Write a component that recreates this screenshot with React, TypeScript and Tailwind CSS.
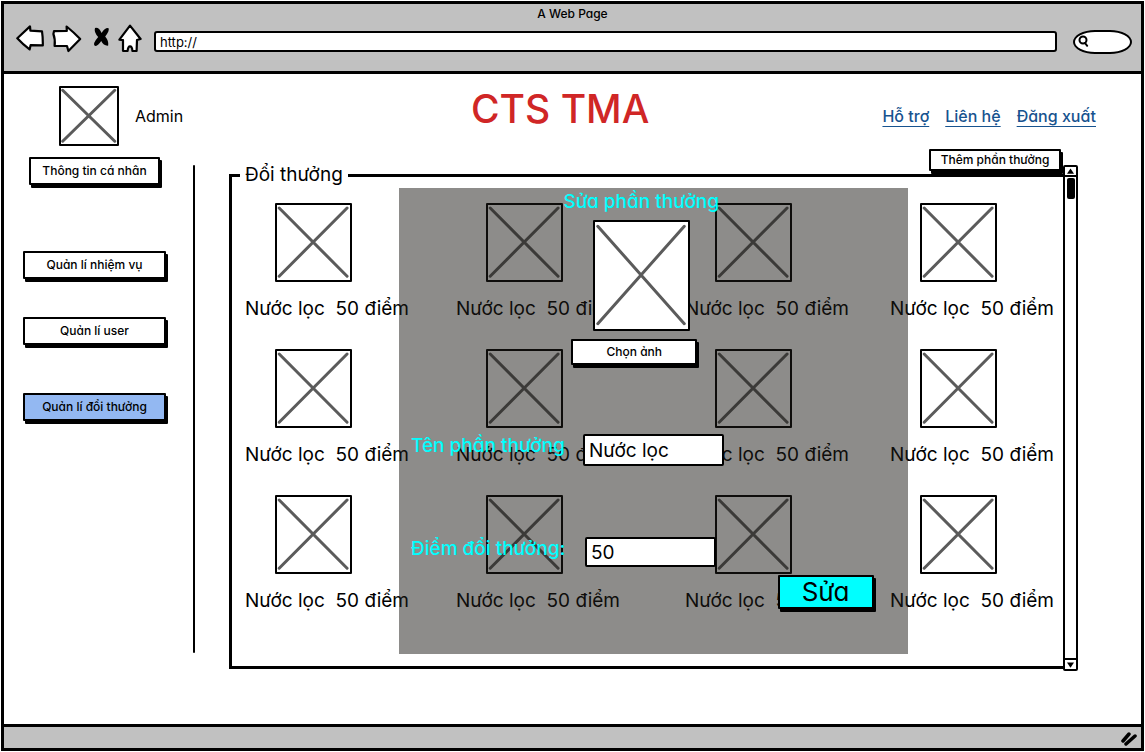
import type { ReactNode } from "react";

const ink = "#000000";

function CrossBox({ className }: { className: string }) {
  return (
    <div className={`shrink-0 rounded-[1px] border-[2px] border-black ${className}`} role="img" aria-label="Ảnh">
      <svg className="block h-full w-full" viewBox="0 0 100 100" preserveAspectRatio="none" aria-hidden="true">
        <path
          d="M3 4 L96 95 M96 4 L3 95"
          stroke="#5b5b5b"
          strokeWidth="3"
          strokeLinecap="round"
          vectorEffect="non-scaling-stroke"
          fill="none"
        />
      </svg>
    </div>
  );
}

function SketchButton({ className, children }: { className: string; children: ReactNode }) {
  return (
    <button
      type="button"
      className={`flex items-center justify-center whitespace-nowrap rounded-[1px] border-[2px] border-black shadow-[2px_3px_0_0_#000] ${className}`}
    >
      {children}
    </button>
  );
}

function Chrome() {
  return (
    <header className="border-b-[3px] border-black bg-[#c1c1c1] pb-4">
      <h1 className="text-center text-[12px] font-medium leading-5">A Web Page</h1>
      <div className="flex h-[31px] items-center pl-3 pr-[9px]">
        <button type="button" aria-label="Quay lại">
          <svg width="28" height="30" viewBox="0 0 28 30" fill="#fff" stroke={ink} strokeWidth="2.2" strokeLinejoin="round">
            <path d="M1.3 13.2 L14 1.4 L14.4 5.6 L26 6.4 Q27 13 26.8 20.4 L14.6 20.2 L13.6 24.4 Q7 19.4 1.3 13.2 Z" />
          </svg>
        </button>
        <button type="button" aria-label="Tiến" className="ml-2">
          <svg width="30" height="30" viewBox="0 0 30 30" fill="#fff" stroke={ink} strokeWidth="2.2" strokeLinejoin="round">
            <path d="M2 6.2 L14.8 6 L14.6 1.5 Q21.400 7 28.200 14 L16.4 26 L15 21 L2.6 21 Q3.4 14 1.4 9 Z" />
          </svg>
        </button>
        <button type="button" aria-label="Dừng" className="ml-2.5">
          <svg width="20" height="30" viewBox="0 0 20 30" fill={ink}>
            <path d="M3 3 Q7 2 9.600 8 Q13 2.500 16.600 3.200 Q17.600 6 13.200 11.400 Q17 16 16.200 20.600 Q11.600 21 9.200 16 Q6 21 3 21 Q0 19 6.200 12 Q1.600 7 3 3 Z" />
          </svg>
        </button>
        <button type="button" aria-label="Trang chủ" className="ml-1.5">
          <svg width="24" height="32" viewBox="0 0 24 32" fill="#fff" stroke={ink} strokeWidth="2.2" strokeLinejoin="round">
            <path d="M12 1.600 L22.600 15 L19 16 L18.600 27 L14.400 27 Q14.200 22.400 12 22.400 Q10 22.400 9.600 27 L5 26.800 L5 16.200 L1.400 15.600 Z" />
          </svg>
        </button>
        <input
          aria-label="Địa chỉ"
          defaultValue="http://"
          className="ml-3 mt-1 h-[21px] min-w-0 flex-1 rounded-[3px] border-[2px] border-black bg-white pl-1 text-[13px] outline-none"
        />
        <label className="ml-4 mt-1 flex h-6 w-[59px] items-center border-[2px] border-black bg-white pl-[3px] [border-radius:22px/12px]">
          <svg width="11" height="13" viewBox="0 0 11 13" fill="none" stroke={ink} strokeWidth="2" strokeLinecap="round" className="shrink-0">
            <circle cx="5" cy="5" r="3.500" />
            <path d="M7 8 L9.200 10.800" />
          </svg>
          <input type="search" aria-label="Tìm kiếm" className="w-full min-w-0 bg-transparent text-[13px] outline-none" />
        </label>
      </div>
    </header>
  );
}

function Sidebar() {
  return (
    <nav className="flex w-[189px] shrink-0 flex-col pl-[19px] pt-2 text-[12px] font-medium">
      <SketchButton className="ml-1.5 h-7 w-[131px] bg-white">Thông tin cá nhân</SketchButton>
      <SketchButton className="mt-[66px] h-7 w-[143px] bg-white">Quản lí nhiệm vụ</SketchButton>
      <SketchButton className="mt-[38px] h-7 w-[143px] bg-white">Quản lí user</SketchButton>
      <SketchButton className="mt-12 h-7 w-[143px] bg-[#93b8f2]">Quản lí đổi thưởng</SketchButton>
    </nav>
  );
}

const rewards = Array.from({ length: 12 }, (_, id) => ({ id, name: "Nước lọc", points: 50 }));

function EditDialog() {
  return (
    <form
      aria-label="Sửa phần thưởng"
      className="absolute bottom-3 left-[20.1%] top-px flex w-[61.2%] flex-col bg-[#1c1a16]/50 pl-3"
      onSubmit={(e) => e.preventDefault()}
    >
      <div className="flex flex-col items-center pr-[36px]">
        <h3 className="pt-0.5 text-[19px] font-medium leading-6 text-[#00ffff]">Sửa phần thưởng</h3>
        <CrossBox className="mt-1.5 h-[111px] w-[97px] bg-white" />
        <SketchButton className="mr-3.5 mt-2 h-[26px] w-[126px] bg-white text-[12px] font-medium">Chọn ảnh</SketchButton>
      </div>
      <div className="mt-[69px] flex">
        <label htmlFor="reward-name" className="w-[172px] shrink-0 text-[19px] font-medium leading-6 text-[#00ffff]">
          Tên phần thưởng
        </label>
        <input
          id="reward-name"
          defaultValue="Nước lọc"
          className="h-8 w-[141px] rounded-[2px] border-[2px] border-black bg-white pl-1 text-[19px] outline-none"
        />
      </div>
      <div className="mt-[71px] flex">
        <label htmlFor="reward-points" className="w-[174px] shrink-0 text-[19px] font-medium leading-6 text-[#00ffff]">
          Điểm đổi thưởng:
        </label>
        <input
          id="reward-points"
          defaultValue="50"
          className="h-[30px] w-[131px] rounded-[2px] border-[2px] border-black bg-white pl-1 text-[19px] outline-none"
        />
      </div>
      <SketchButton className="mr-[34px] mt-2 h-[34px] w-[96px] self-end bg-[#00ffff] text-[26px] leading-none">Sửa</SketchButton>
    </form>
  );
}

function ScrollBar() {
  return (
    <div className="-mb-0.5 mt-4 flex w-[15px] shrink-0 flex-col rounded-[2px] border-[2px] border-black bg-white" aria-hidden="true">
      <div className="flex h-[10px] items-center justify-center border-b-[2px] border-black">
        <svg width="7" height="6" viewBox="0 0 8 6">
          <path d="M4 0 L8 6 L0 6 Z" />
        </svg>
      </div>
      <div className="flex flex-1 flex-col items-center pt-px">
        <div className="h-[21px] w-2 rounded-[2px] bg-black" />
      </div>
      <div className="flex h-[11px] items-center justify-center border-t-[2px] border-black">
        <svg width="7" height="6" viewBox="0 0 8 6">
          <path d="M0 0 L8 0 L4 6 Z" />
        </svg>
      </div>
    </div>
  );
}

export default function App() {
  return (
    <div className="flex min-h-screen flex-col bg-white p-px font-['Inter','Noto_Sans',sans-serif] text-black [font-feature-settings:'cv11']">
      <div className="flex flex-1 flex-col border-[3px] border-black">
        <Chrome />

        <div className="flex h-[75px] items-start pl-[55px] pr-[45px] pt-3">
          <CrossBox className="h-[60px] w-[60px]" />
          <span className="ml-4 w-[200px] pt-[18px] text-[16px] leading-6">Admin</span>
          <h2 className="flex-1 pl-[136px] text-[39px] font-medium leading-[46px] text-[#d02626]">CTS TMA</h2>
          <div className="flex gap-4 whitespace-nowrap pt-[18px] text-[16px] font-medium leading-6 text-[#17538f]">
            <a href="#support" className="underline underline-offset-4">Hỗ trợ</a>
            <a href="#contact" className="underline underline-offset-4">Liên hệ</a>
            <a href="#logout" className="underline underline-offset-4">Đăng xuất</a>
          </div>
        </div>

        <main className="flex flex-1 pb-[55px] pr-[63px]">
          <Sidebar />
          <div className="mb-4 mt-4 w-[2px] shrink-0 rounded-full bg-black" />
          <section className="ml-[34px] flex min-w-0 flex-1">
            <div className="flex min-w-0 flex-1 flex-col">
              <div className="flex h-6 justify-end pr-[2px]">
                <SketchButton className="h-[22px] w-[132px] bg-white text-[12px] font-medium">Thêm phần thưởng</SketchButton>
              </div>
              <fieldset className="-mt-2.5 flex min-w-0 flex-1 flex-col border-[3px] border-r-0 border-black">
                <legend className="ml-2 px-[5px] text-[19px] leading-6">Đổi thưởng</legend>
                <div className="relative flex-1 pt-4">
                  <ul className="grid grid-cols-[211fr_229fr_205fr_173fr] pl-[13px]">
                    {rewards.map((r) => (
                      <li key={r.id} className="h-[146px]">
                        <CrossBox className="ml-[30px] h-[79px] w-[77px]" />
                        <p className="mt-[15px] whitespace-pre text-[19px] leading-6">{`${r.name}  ${r.points} điểm`}</p>
                      </li>
                    ))}
                  </ul>
                  <EditDialog />
                </div>
              </fieldset>
            </div>
            <ScrollBar />
          </section>
        </main>

        <footer className="flex h-6 items-center justify-end border-t-[3px] border-black bg-[#c1c1c1] pr-[3px]">
          <svg width="18" height="16" viewBox="0 0 18 16" fill="none" stroke={ink} strokeWidth="3.500" strokeLinecap="round" aria-hidden="true">
            <path d="M3 11 L9 4 M6 14 L15 6" />
          </svg>
        </footer>
      </div>
    </div>
  );
}
